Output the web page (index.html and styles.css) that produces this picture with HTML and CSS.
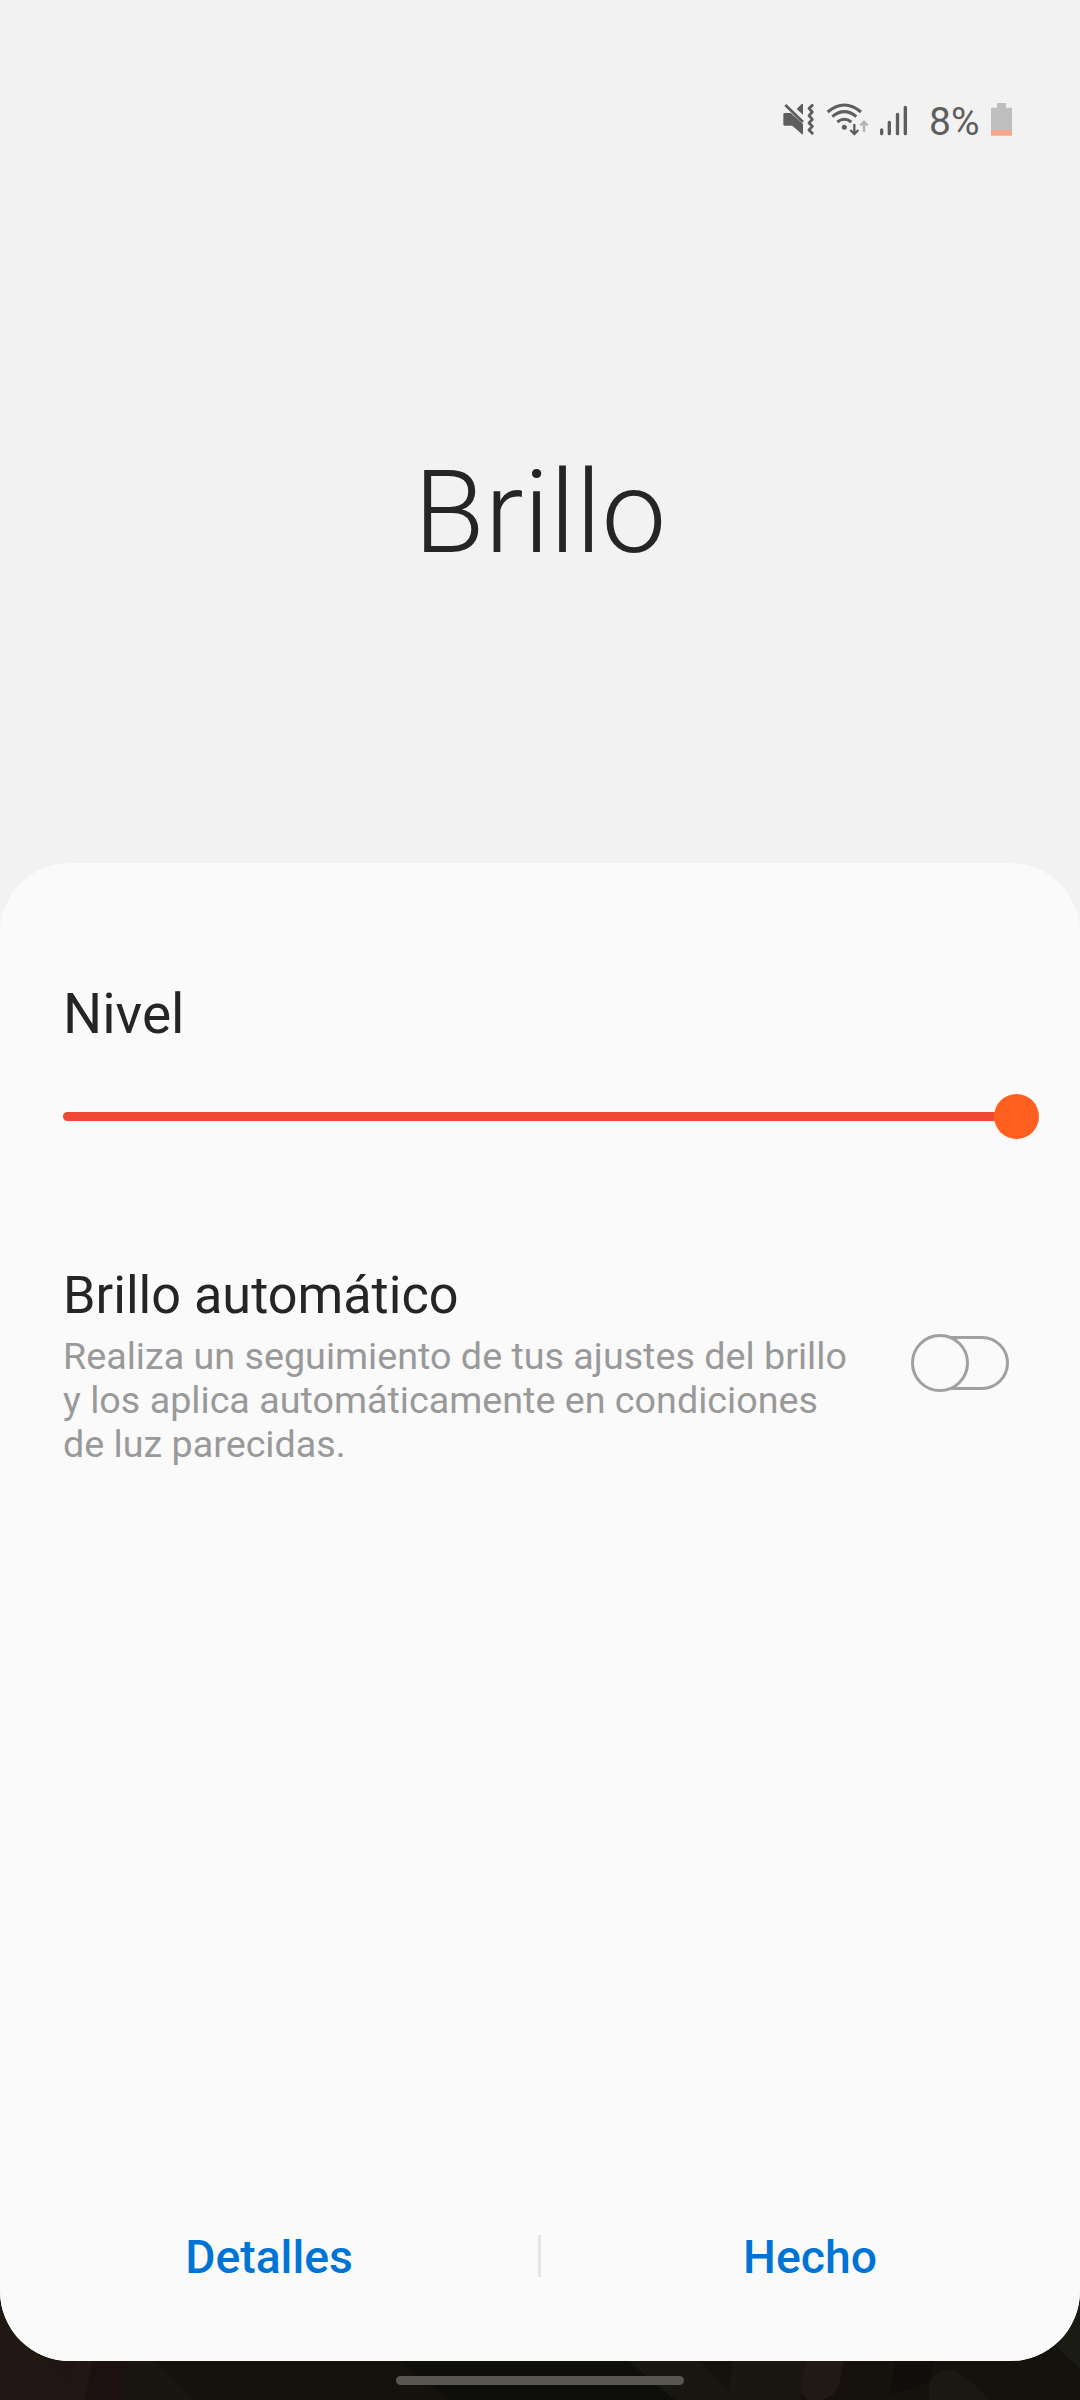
FILE: index.html
```html
<!DOCTYPE html>
<html lang="es">
<head>
<meta charset="utf-8">
<title>Brillo</title>
<link rel="stylesheet" href="styles.css">
</head>
<body>
<div class="screen">
  <svg class="wallpaper" viewBox="0 0 1080 110" aria-hidden="true">
    <path fill="#15120d" d="M0 0H1080V110H0Z"/>
    <path fill="#221813" d="M0 0H110L85 110H0Z"/>
    <path fill="#201514" d="M43 71H75L71 97Z"/>
    <path fill="#1c1110" d="M92 71H127L123 110H85Z"/>
    <path fill="#161510" d="M127 71H155L195 110H123Z"/>
    <path fill="#0e0e0a" d="M400 71H628L675 110H450Z"/>
    <path fill="#171611" d="M628 71H700L728 101V110H675Z"/>
    <path fill="#1a1712" d="M733 71H806L801 110H727Z"/>
    <path fill="#201914" d="M806 71H844L839 95Q834 108 820 110H808Q800 104 801 94Z"/>
    <path fill="#0f0e0a" d="M895 71H934L930 92 889 106Z"/>
    <path fill="#1b1712" d="M929 110V94Q935 78 955 80L970 91 990 110Z"/>
    <path fill="#1a1b13" d="M1080 0V79L1058 58 1040 30Z"/>
  </svg>
  <main class="window">
    <header class="status-bar">
      <svg class="icon-mute" viewBox="36 39 102 99" aria-hidden="true">
        <path fill="#5e5e5e" d="M40 73Q40 69 44 69H62L99 102V133H96L67 107H44Q40 107 40 103ZM80 57 95 42H99V74Z"/>
        <path fill="none" stroke="#5e5e5e" stroke-width="8.500" d="M46 45 99 96"/>
        <path fill="none" stroke="#5e5e5e" stroke-width="8.500" stroke-linecap="round" stroke-linejoin="round" d="M127 46 117 55 127 66 117 77 127 88 117 99 127 109 117 120 127 130"/>
      </svg>
      <svg class="icon-wifi" viewBox="168 36 132 102" aria-hidden="true">
        <g fill="none" stroke="#5e5e5e" stroke-width="9">
          <path d="M173 66Q223 24 273 66"/>
          <path d="M187 80Q223 50 259 80"/>
          <path d="M202 96Q223 80 244 96"/>
        </g>
        <circle cx="223" cy="112" r="7.5" fill="#5e5e5e"/>
        <path fill="none" stroke="#5e5e5e" stroke-width="7" d="M253 102V132M241 120 253 132 265 120"/>
        <path fill="none" stroke="#b5b5b5" stroke-width="7.500" d="M282 126V96M271 106 282 95 293 106"/>
      </svg>
      <svg class="icon-signal" viewBox="330 45 84 93" aria-hidden="true">
        <path fill="none" stroke="#5e5e5e" stroke-width="10" stroke-linecap="round" d="M335 120V131M358 97V131M382.500 73V131M406 52V131"/>
      </svg>
      <span class="battery-level">8%</span>
      <svg class="icon-battery" viewBox="303 39 63 99" aria-hidden="true">
        <path fill="#bfbfbf" d="M321 39H348V53H363Q366 53 366 56V120H303V56Q303 53 306 53H321Z"/>
        <path fill="#f7a58c" d="M303 120H366V134Q366 137 363 137H306Q303 137 303 134Z"/>
      </svg>
    </header>
    <h1 class="title">Brillo</h1>
    <section class="sheet">
      <h2 class="level-label">Nivel</h2>
      <div class="slider"><div class="slider-track"></div><div class="slider-thumb"></div></div>
      <div class="setting">
        <div class="setting-text">
          <h2 class="setting-title">Brillo automático</h2>
          <p class="setting-description">Realiza un seguimiento de tus ajustes del brillo<br>y los aplica automáticamente en condiciones<br>de luz parecidas.</p>
        </div>
        <svg class="toggle" viewBox="0 0 98 58" role="switch" aria-checked="false">
          <g fill="#fafafa" stroke="#a0a0a0" stroke-width="3">
            <rect x="3" y="3.500" width="93.500" height="51" rx="25.500"/>
            <circle cx="29" cy="29" r="27.500"/>
          </g>
        </svg>
      </div>
      <footer class="actions">
        <a class="action">Detalles</a>
        <span class="divider"></span>
        <a class="action">Hecho</a>
      </footer>
    </section>
  </main>
  <div class="navigation"><div class="home-handle"></div></div>
</div>
</body>
</html>
```
FILE: styles.css
```css
* { box-sizing: border-box; }
body { margin: 0; font-family: Roboto, sans-serif; color: #252525; }
h1, h2, p { margin: 0; font-weight: 400; }
.screen { position: relative; isolation: isolate; width: 1080px; height: 2400px; display: flex; flex-direction: column; }
.wallpaper { position: absolute; z-index: -1; left: 0; bottom: 0; width: 1080px; height: 110px; }
.window { height: 2361px; display: flex; flex-direction: column; background: #f2f2f2; border-radius: 0 0 70px 70px; }
.status-bar { height: 240px; padding: 102px 68px 0 0; display: flex; justify-content: flex-end; align-items: flex-start; }
.icon-mute { width: 34px; height: 33px; margin: 1px 10px 0 0; }
.icon-wifi { width: 44px; height: 34px; margin-right: 10px; }
.icon-signal { width: 28px; height: 31px; margin: 3px 21px 0 0; }
.battery-level { width: 52px; margin-right: 10px; font-size: 39px; line-height: 40px; color: #5e5e5e; }
.icon-battery { width: 21px; height: 33px; margin-top: 1px; }
.title { height: 623px; padding-top: 205px; text-align: center; font-size: 115.5px; font-weight: 300; line-height: 136px; }
.sheet { flex: 1; display: flex; flex-direction: column; padding: 119px 0 0 63px; background: #fafafa; border-radius: 70px; }
.level-label { font-size: 55px; line-height: 64px; }
.slider { width: 976px; height: 45px; margin-top: 48px; display: flex; align-items: center; }
.slider-track { width: 935px; height: 9px; margin-right: -4px; background: #f04833; border-radius: 4.5px 0 0 4.5px; }
.slider-thumb { width: 45px; height: 45px; border-radius: 50%; background: #ff6020; }
.setting { display: flex; justify-content: space-between; margin-top: 125px; padding-right: 71px; }
.setting-title { padding-top: 1px; font-size: 52.2px; line-height: 62px; }
.setting-description { margin-top: 7px; font-size: 37.7px; line-height: 44px; color: #999; white-space: nowrap; }
.toggle { width: 98px; height: 58px; margin-top: 70px; }
.actions { display: flex; align-items: center; height: 80px; margin: auto 0 65px -63px; }
.action { width: 538px; padding-top: 2px; text-align: center; font-size: 46.3px; font-weight: 500; line-height: 54px; color: #0074d4; }
.divider { width: 3px; height: 42px; background: #e5e5e5; }
.navigation { height: 39px; display: flex; justify-content: center; padding-top: 15px; }
.home-handle { width: 288px; height: 9px; border-radius: 5px; background: #575650; }
```
